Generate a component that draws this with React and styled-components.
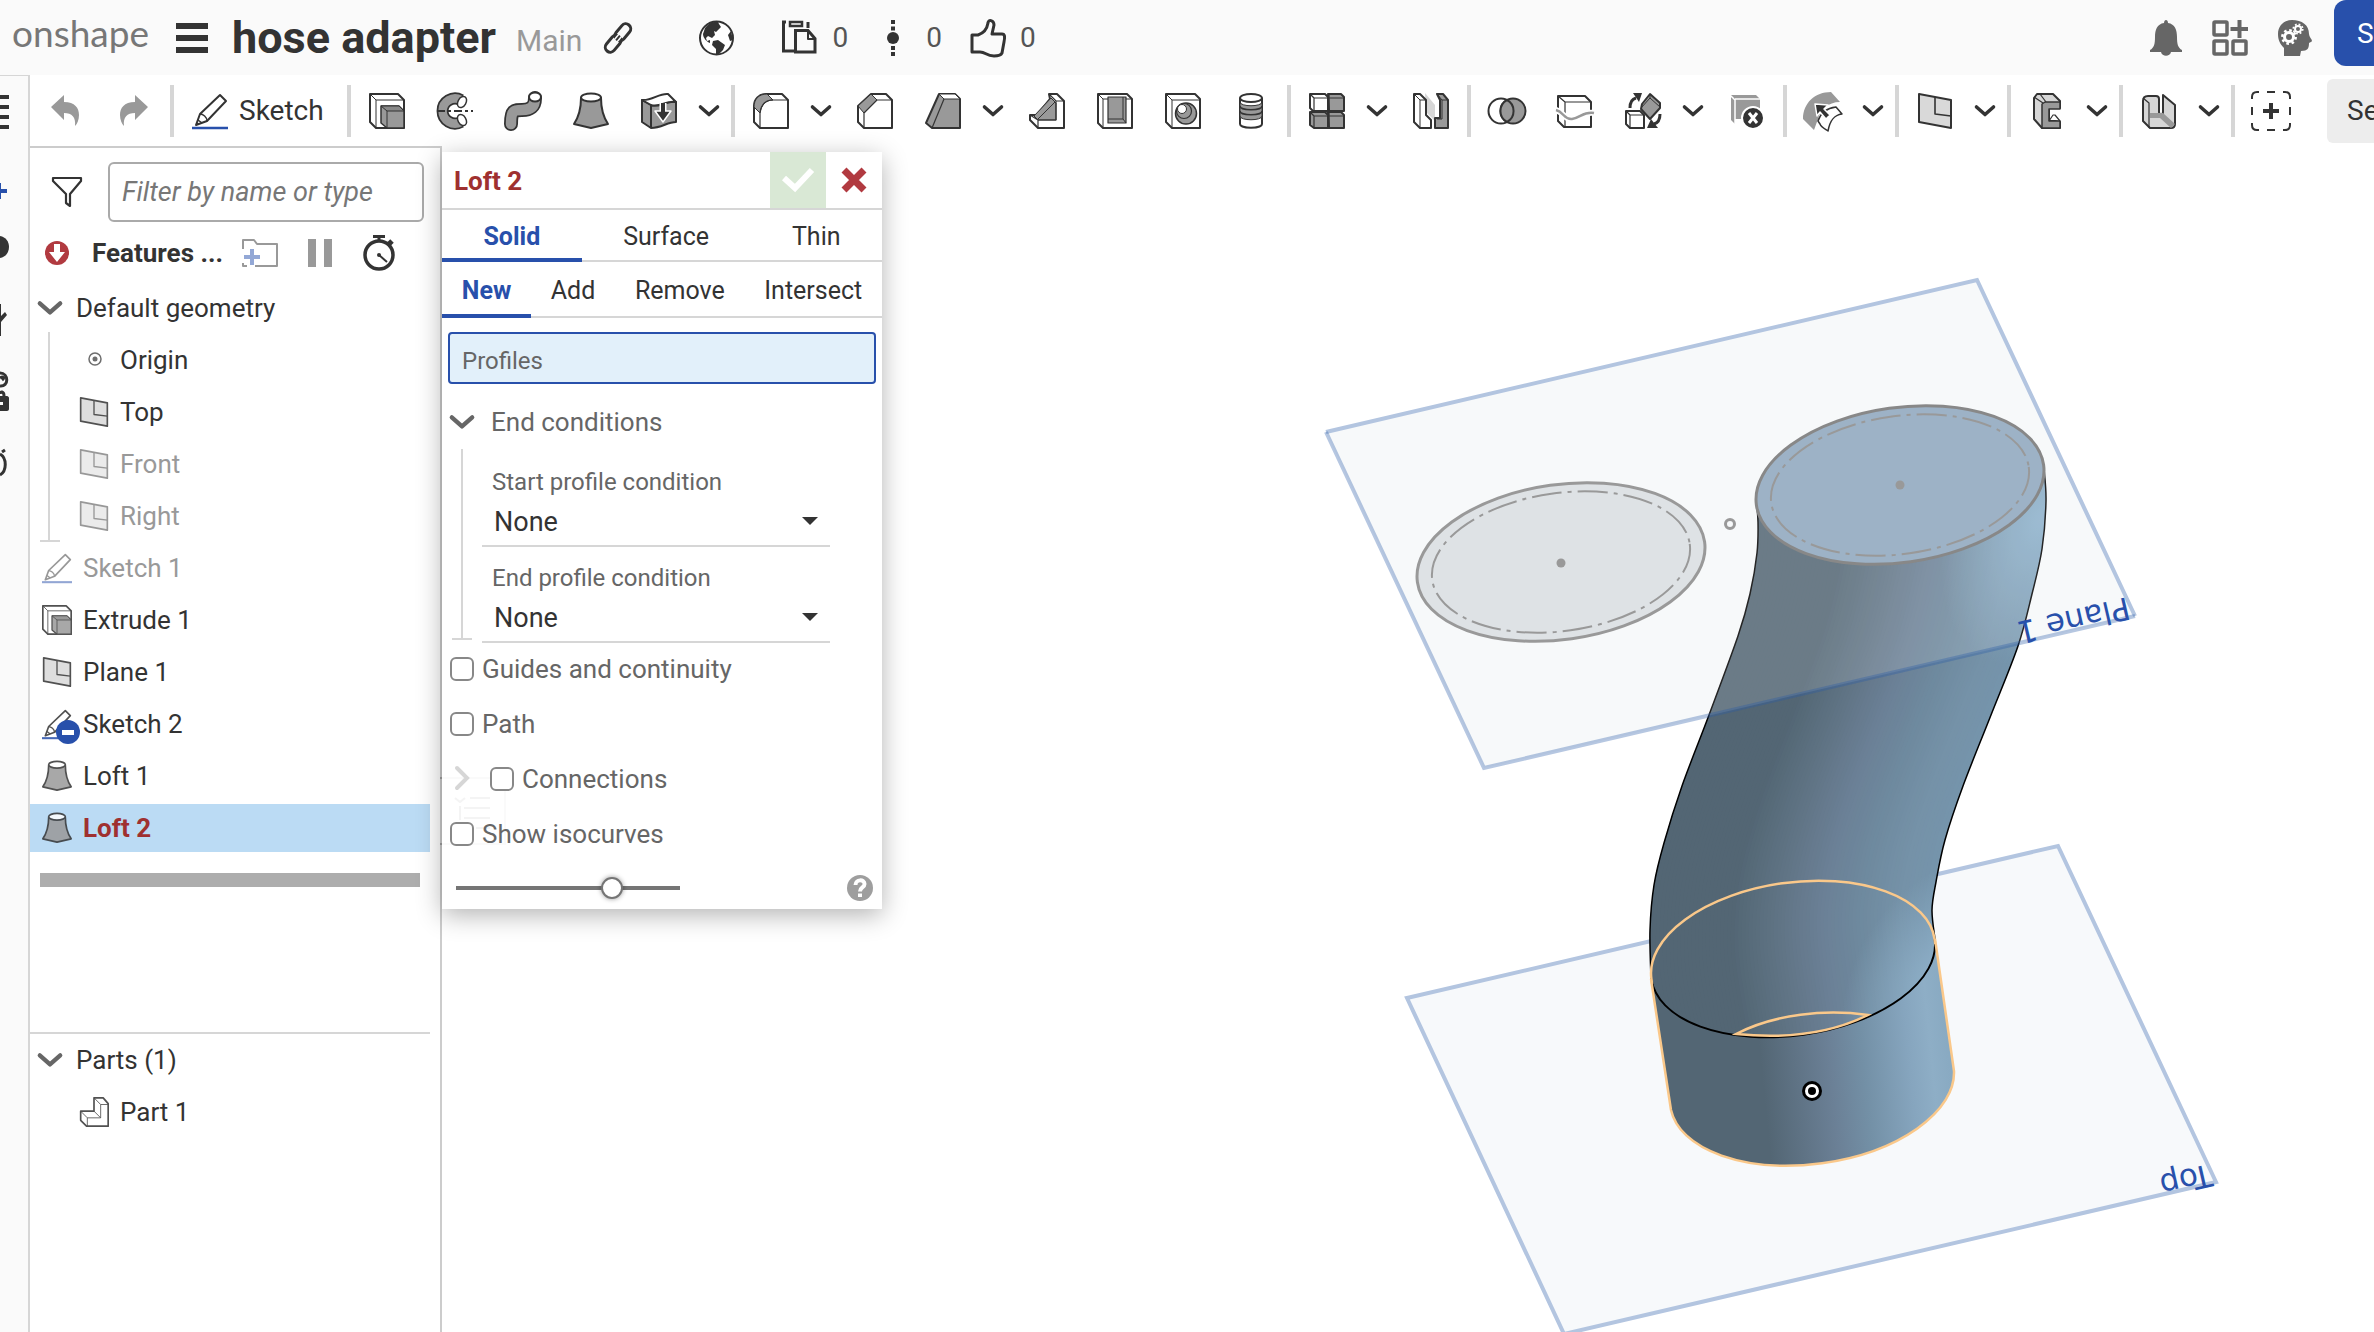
import React, { useState } from 'react';
import styled, { createGlobalStyle, css } from 'styled-components';

const GlobalStyle = createGlobalStyle`
  * {
    box-sizing: border-box;
  }
  body {
    margin: 0;
    font-family: Roboto, "Liberation Sans", sans-serif;
    font-size: 26px;
    color: #333;
    background: #fff;
  }
  button, input, select {
    font-family: inherit;
    font-size: inherit;
    color: inherit;
  }
  button {
    border: none;
    background: none;
    padding: 0;
    cursor: pointer;
  }
  ul {
    list-style: none;
    margin: 0;
    padding: 0;
  }
  svg {
    display: block;
    overflow: visible;
    flex: none;
  }
`;

const Page = styled.div`
  display: flex;
  flex-direction: column;
  height: 100vh;
  overflow: hidden;
`;

/* ---------- document header ---------- */

const Header = styled.header`
  display: flex;
  align-items: center;
  flex: none;
  height: 75px;
  padding-left: 12px;
  background: #fafafa;
`;
const Brand = styled.a`
  width: 164px;
  padding-bottom: 10px;
  font-family: Lato, sans-serif;
  font-size: 37px;
  line-height: 40px;
  color: #777;
  text-decoration: none;
`;
const MenuButton = styled.button`
  margin-right: 24px;
`;
const DocTitle = styled.h1`
  margin: 0 20px 0 0;
  font-size: 45px;
  line-height: 48px;
  font-weight: 700;
  white-space: nowrap;
`;
const Workspace = styled.span`
  margin-right: 22px;
  font-size: 30px;
  line-height: 48px;
  padding-top: 6px;
  color: #999;
`;
const HeaderIcon = styled.button`
  margin-right: ${(props) => props.$gap || 0}px;
`;
const Stats = styled.div`
  display: flex;
  gap: 28px;
`;
const Stat = styled.button`
  display: flex;
  align-items: center;
  gap: 14px;
  font-size: 28px;
  line-height: 36px;
  color: #555;
`;
const Account = styled.div`
  display: flex;
  align-items: center;
  align-self: flex-start;
  gap: 30px;
  height: 66px;
  margin-left: auto;
`;
const AccountIcon = styled.button`
  padding-top: 10px;
`;
const ShareButton = styled.button`
  width: 40px;
  height: 66px;
  margin-left: -8px;
  padding-left: 23px;
  overflow: hidden;
  text-align: left;
  white-space: nowrap;
  border-radius: 12px 0 0 12px;
  font-size: 28px;
  color: #fff;
  background: #2850ab;
`;

/* ---------- body ---------- */

const Body = styled.div`
  display: flex;
  flex: 1;
  min-height: 0;
`;
const Rail = styled.nav`
  flex: none;
  width: 30px;
  border-top: 1px solid #d6d6d6;
  border-right: 2px solid #d6d6d6;
  background: #fafafa;
`;
const RailItem = styled.button`
  display: flex;
  align-items: center;
  width: 28px;
  height: ${(props) => props.$h}px;
`;
const Main = styled.main`
  display: flex;
  flex-direction: column;
  flex: 1;
  min-width: 0;
`;
const Toolbar = styled.div`
  display: flex;
  align-items: center;
  flex: none;
  height: 71px;
  background: #fff;
`;
const Tool = styled.button`
  display: flex;
  justify-content: center;
  align-items: center;
  flex: none;
  width: ${(props) => props.$w || 68}px;
  height: 52px;
`;
const Drop = styled(Tool)`
  width: 32px;
  margin-right: 4px;
`;
const Divider = styled.span`
  flex: none;
  width: 4px;
  height: 52px;
  margin: 0 2px;
  background: #d6d6d6;
`;
const SketchButton = styled(Tool)`
  justify-content: flex-start;
  width: 169px;
  padding-left: 16px;
  gap: 11px;
  font-size: 28px;
`;
const SearchTools = styled.button`
  flex: 1;
  min-width: 0;
  height: 64px;
  margin-left: 22px;
  padding-left: 20px;
  overflow: hidden;
  text-align: left;
  white-space: nowrap;
  font-size: 28px;
  border-radius: 6px 0 0 6px;
  background: #ededed;
`;
const Studio = styled.div`
  display: flex;
  flex: 1;
  min-height: 0;
`;

/* ---------- feature list ---------- */

const Side = styled.aside`
  display: flex;
  flex-direction: column;
  flex: none;
  width: 412px;
  padding-right: 10px;
  border-top: 2px solid #ccc;
  border-right: 2px solid #ccc;
`;
const FilterRow = styled.div`
  display: flex;
  align-items: center;
  gap: 26px;
  padding: 14px 6px 0 22px;
`;
const FilterInput = styled.input`
  flex: 1;
  min-width: 0;
  height: 60px;
  padding: 0 12px;
  border: 2px solid #aaa;
  border-radius: 6px;
  font-size: 27px;
  &::placeholder {
    font-style: italic;
    color: #777;
    opacity: 1;
  }
`;
const FeaturesHead = styled.div`
  display: flex;
  align-items: center;
  height: 62px;
  padding-left: 15px;
`;
const FeaturesTitle = styled.h2`
  width: 150px;
  margin: 0 0 0 23px;
  font-size: 26px;
  font-weight: 700;
`;
const HeadButton = styled.button`
  margin-right: 30px;
`;
const GroupRow = styled.button`
  display: flex;
  align-items: center;
  gap: 14px;
  width: 100%;
  height: 48px;
  padding-left: 8px;
`;
const Children = styled.ul`
  position: relative;
  padding-top: 4px;
  &::before {
    content: "";
    position: absolute;
    left: 18px;
    top: 0;
    bottom: 2px;
    width: 2px;
    background: #d6d6d6;
  }
  &::after {
    content: "";
    position: absolute;
    left: 10px;
    bottom: 2px;
    width: 20px;
    height: 2px;
    background: #d6d6d6;
  }
`;
const Row = styled.li`
  display: flex;
  align-items: center;
  gap: 11px;
  height: 48px;
  margin-bottom: 4px;
  padding-left: ${(props) => (props.$nested ? 49 : 12)}px;
  color: ${(props) => (props.$muted ? '#999' : '#333')};
  svg {
    width: 30px;
    height: 30px;
    opacity: ${(props) => (props.$muted ? 0.5 : 0.85)};
  }
  ${(props) => props.$selected && css`
    font-weight: 700;
    color: #9f3030;
    background: #bbdbf4;
  `}
`;
const IconStack = styled.span`
  position: relative;
`;
const MinusBadge = styled.span`
  position: absolute;
  left: 14px;
  top: 11px;
  display: flex;
  align-items: center;
  justify-content: center;
  width: 24px;
  height: 24px;
  border-radius: 50%;
  background: #2850ab;
  &::before {
    content: "";
    width: 12px;
    height: 5px;
    background: #fff;
  }
`;
const RollbackBar = styled.div`
  height: 14px;
  margin: 17px 10px 0;
  background: #adadad;
`;
const Parts = styled.section`
  margin-top: auto;
  height: 300px;
  border-top: 2px solid #d6d6d6;
  padding-top: 2px;
  ul {
    padding-top: 4px;
  }
`;

/* ---------- loft dialog ---------- */

const Viewport = styled.section`
  position: relative;
  flex: 1;
  min-width: 0;
`;
const Dialog = styled.form`
  position: absolute;
  left: 0;
  top: 6px;
  width: 440px;
  height: 757px;
  background: #fff;
  box-shadow: 0 6px 24px rgba(0, 0, 0, 0.3);
`;
const DialogHead = styled.div`
  display: flex;
  align-items: center;
  height: 58px;
  border-bottom: 2px solid #d6d6d6;
`;
const DialogTitle = styled.h2`
  flex: 1;
  margin: 0;
  padding: 2px 0 0 12px;
  font-size: 26px;
  font-weight: 700;
  color: #9f3030;
`;
const HeadAction = styled.button`
  display: flex;
  align-items: center;
  justify-content: center;
  width: 56px;
  height: 56px;
  background: ${(props) => (props.$ok ? '#d9e8d5' : 'transparent')};
`;
const Tabs = styled.div`
  display: flex;
  height: ${(props) => props.$h}px;
  border-bottom: 2px solid #d6d6d6;
`;
const Tab = styled.button`
  flex: 1 1 auto;
  margin-bottom: -2px;
  padding-top: 5px;
  border-bottom: 4px solid transparent;
  font-size: 25px;
  ${(props) => props.$active && css`
    font-weight: 700;
    color: #2850ab;
    border-color: #2850ab;
  `}
`;
const ProfilesInput = styled.input`
  display: block;
  width: 428px;
  height: 52px;
  margin: 14px 6px 0;
  padding: 5px 12px 0;
  border: 2px solid #2850ab;
  border-radius: 4px;
  outline: none;
  font-size: 24px;
  background: #e2f0fa;
  &::placeholder {
    color: #666;
    opacity: 1;
  }
`;
const Section = styled.button`
  display: flex;
  align-items: center;
  gap: 17px;
  height: 48px;
  margin-top: 14px;
  padding-left: 8px;
  color: #666;
`;
const Conditions = styled.div`
  position: relative;
  margin-top: 3px;
  padding-left: 40px;
  &::before {
    content: "";
    position: absolute;
    left: 19px;
    top: 0;
    bottom: 4px;
    width: 2px;
    background: #d6d6d6;
  }
  &::after {
    content: "";
    position: absolute;
    left: 10px;
    bottom: 3px;
    width: 20px;
    height: 2px;
    background: #d6d6d6;
  }
`;
const Field = styled.div`
  position: relative;
  display: flex;
  flex-direction: column;
  width: 348px;
  height: ${(props) => (props.$first ? 98 : 96)}px;
  justify-content: flex-end;
  border-bottom: 2px solid #d6d6d6;
  label {
    padding-left: 10px;
    font-size: 24px;
    line-height: 32px;
    color: #666;
  }
  svg {
    position: absolute;
    right: 12px;
    bottom: 20px;
    pointer-events: none;
  }
`;
const Select = styled.select`
  appearance: none;
  height: 47px;
  padding: 0 40px 0 12px;
  border: none;
  outline: none;
  font-size: 27px;
  background: transparent;
`;
const Checks = styled.div`
  position: relative;
  display: flex;
  flex-direction: column;
  padding: 11px 0 0 8px;
`;
const Check = styled.label`
  display: flex;
  align-items: center;
  gap: 8px;
  height: 30px;
  margin-bottom: 25px;
  color: #666;
  input {
    appearance: none;
    width: 24px;
    height: 24px;
    margin: 0;
    border: 2px solid #888;
    border-radius: 6px;
    background: #fff;
  }
`;
const CheckGroup = styled.div`
  display: flex;
  gap: 20px;
  padding-left: 5px;
  button {
    height: 28px;
  }
`;
const DialogFoot = styled.div`
  display: flex;
  align-items: center;
  justify-content: space-between;
  padding: 1px 9px 0 14px;
`;
const Slider = styled.input`
  appearance: none;
  width: 224px;
  height: 22px;
  margin: 0;
  background: linear-gradient(#757575, #757575) center / 100% 4px no-repeat;
  &::-webkit-slider-thumb {
    appearance: none;
    width: 22px;
    height: 22px;
    border: 2px solid #757575;
    border-radius: 50%;
    background: #fff;
    box-shadow: 0 0 5px rgba(0, 0, 0, 0.4);
  }
`;
const GhostList = styled.svg`
  position: absolute;
  left: -2px;
  top: 625px;
  pointer-events: none;
`;
const Scene = styled.svg`
  width: 100%;
  height: 100%;
`;

/* ---------- icons ---------- */

const Icon = ({ w = 36, h = 36, children, label }) => (
  <svg
    width={w}
    height={h}
    viewBox={`0 0 ${w} ${h}`}
    fill="none"
    stroke="#333"
    strokeWidth="2"
    strokeLinejoin="round"
    aria-label={label}
  >
    {children}
  </svg>
);

const Chevron = ({ w = 20, color = '#333' }) => (
  <svg width={w} height={w * 0.6} viewBox="0 0 20 12" fill="none" stroke={color} strokeWidth="3.6">
    <path d="M1.5 2l8.500 7.500L18.500 2" strokeLinecap="round" strokeLinejoin="round" />
  </svg>
);

const PencilIcon = () => (
  <Icon>
    <path d="M4 32L8 21 28 2l6 6-19 20z" fill="#fff" />
    <path d="M8 21c3 0 7 3 7 7M6 27l4 3" strokeWidth="1.5" />
    <path d="M0 35h36" stroke="#2850ab" strokeWidth="2.5" />
  </Icon>
);
const ExtrudeIcon = () => (
  <Icon>
    <path d="M1 1h28l6 6v28H7l-6-6z" fill="#fff" />
    <path d="M1 1l6 6v28M7 7h28" strokeWidth="1" />
    <path d="M12 13h18l5 5v17H18l-6-5z" fill="#999" strokeWidth="1.5" />
    <path d="M12 13h18l5 5H18z" fill="#888" strokeWidth="1" />
    <path d="M18 18v17" strokeWidth="1" />
  </Icon>
);
const RevolveIcon = () => (
  <Icon>
    <path d="M24 7A12.500 12.500 0 1 0 24 29" strokeWidth="12" />
    <path d="M24 7A12.500 12.500 0 1 0 24 29" stroke="#999" strokeWidth="8.500" />
    <ellipse cx="25" cy="9" rx="4" ry="6" transform="rotate(30 25 9)" fill="#fff" strokeWidth="1.500" />
    <ellipse cx="25" cy="27" rx="4" ry="6" transform="rotate(-30 25 27)" fill="#fff" strokeWidth="1.500" />
    <path d="M0 18h36" strokeDasharray="8 3 3 3" />
  </Icon>
);
const SweepIcon = () => (
  <Icon w={38}>
    <path d="M7 31c0-14 3-14 11-14s13-3 13-12" strokeWidth="14" strokeLinecap="round" />
    <path d="M7 31c0-14 3-14 11-14s13-3 13-12" stroke="#999" strokeWidth="10.500" strokeLinecap="round" />
    <ellipse cx="31" cy="4" rx="6" ry="4.500" fill="#fff" />
  </Icon>
);
const LoftIcon = () => (
  <Icon>
    <path d="M8 5C8 16 5 25 1 31l17 4 17-4c-4-6-7-15-7-26z" fill="#999" />
    <ellipse cx="18" cy="4.500" rx="10" ry="4" fill="#fff" />
  </Icon>
);
const ThickenIcon = () => (
  <Icon>
    <path d="M1 7l9 5v23l-9-6zM10 12c9 3 15-5 25-3v20c-9 0-14 6-25 6z" fill="#999" />
    <path d="M1 7C11 8 18 0 27 1l8 8c-10-2-16 6-25 3z" fill="#fff" />
    <path d="M22 10v14" stroke="#fff" strokeWidth="7" />
    <path d="M14 18l8 11 8-11z" fill="#333" stroke="#fff" strokeWidth="1.500" />
    <path d="M22 10v12" strokeWidth="4" />
  </Icon>
);
const FilletIcon = () => (
  <Icon>
    <path d="M13 1h16l6 6v28H7l-6-6V13C1 6 6 1 13 1z" fill="#fff" />
    <path d="M1 14C1 6 6 1 14 1l6 6c-7 0-12 5-13 13z" fill="#999" strokeWidth="1" />
    <path d="M7 35V20C8 12 12 7 20 7h15" strokeWidth="1.200" />
  </Icon>
);
const ChamferIcon = () => (
  <Icon>
    <path d="M14 1h15l6 6v28H7l-6-6V13z" fill="#fff" />
    <path d="M1 13L14 1l6 6L7 20z" fill="#999" strokeWidth="1" />
    <path d="M7 35V20L20 7h15" strokeWidth="1.200" />
  </Icon>
);
const DraftIcon = () => (
  <Icon>
    <path d="M14 1h16l5 5v29H7l-6-5z" fill="#999" />
    <path d="M14 1h16l5 5H19z" fill="#fff" strokeWidth="1" />
    <path d="M19 6L7 35" strokeWidth="1.200" />
  </Icon>
);
const RibIcon = () => (
  <Icon>
    <path d="M20 1h8l7 7v27H9l-8-8v-5h7l13-16z" fill="#fff" />
    <path d="M5 23L22 5l5 5v17H9z" fill="#999" strokeWidth="1" />
    <path d="M20 1l7 7h8M27 8v19H9v8M1 22l8 5" strokeWidth="1.200" />
    <path d="M9 26L26 9" strokeWidth="1" />
  </Icon>
);
const ShellIcon = () => (
  <Icon>
    <path d="M1 1h29l5 5v29H6l-5-5z" fill="#fff" />
    <path d="M11 4h18v26H11z" fill="#999" strokeWidth="1.200" />
    <path d="M1 1l5 5v29M6 6h5M29 6h6M26 4v22l3 4M11 26h15" strokeWidth="1" />
  </Icon>
);
const HoleIcon = () => (
  <Icon>
    <path d="M1 1h29l5 5v29H7l-6-6z" fill="#fff" />
    <path d="M1 1l6 6v28M7 7h28" strokeWidth="1" />
    <circle cx="21" cy="20.500" r="10.500" fill="#999" strokeWidth="1.500" />
    <circle cx="19" cy="18" r="7.500" fill="#999" strokeWidth="1.200" />
    <circle cx="17" cy="16" r="4.500" fill="#fff" strokeWidth="1" />
  </Icon>
);
const ThreadIcon = () => (
  <Icon w={24}>
    <path d="M1 5v26c0 5 22 5 22 0V5" fill="#fff" />
    <path d="M1 9c0 5 22 5 22 0v14c0 5-22 5-22 0z" fill="#999" strokeWidth="1" />
    <path d="M1 13c0 5 22 5 22 0M1 18c0 5 22 5 22 0" strokeWidth="1.500" />
    <ellipse cx="12" cy="5" rx="11" ry="4" fill="#fff" />
  </Icon>
);
const PatternIcon = () => (
  <Icon>
    <path d="M1 1h15l3 3v14H4l-3-3z" fill="#fff" />
    <path d="M19 1h13l3 3v14H20zM1 19h15l3 3v13H5l-4-3zM19 19h13l3 3v13H20z" fill="#999" />
    <path d="M1 1l4 4v13M5 5h13M20 5h15M1 19l4 4v12M5 23h13M20 23h15M20 1v34" strokeWidth="1.200" />
  </Icon>
);
const MirrorIcon = () => (
  <Icon>
    <path d="M12 0l10 12v16l-9-9z" fill="#d6d6d6" stroke="none" />
    <path d="M1 1h6l6 6v15l5 5v8H7l-6-6z" fill="#fff" />
    <path d="M1 1l6 6v28M7 7h6" strokeWidth="1" />
    <path d="M24 1h6l5 6v28H22V25h5V7z" fill="#999" />
    <path d="M24 1l5 6h6M29 7v19h-5" strokeWidth="1" />
  </Icon>
);
const BooleanIcon = () => (
  <Icon w={38}>
    <circle cx="13" cy="18" r="12.500" fill="#fff" />
    <circle cx="25" cy="18" r="12.500" fill="#999" />
    <path d="M19 7a12.500 12.500 0 0 1 0 22a12.500 12.500 0 0 1 0-22z" fill="#999" />
  </Icon>
);
const SplitIcon = () => (
  <Icon w={38}>
    <path d="M2 3h27l6 6v25H8l-6-6z" fill="#fff" />
    <path d="M2 3l7 6h26M9 9v25" strokeWidth="1.200" />
    <path d="M0 17c8 2 8 10 16 9s12-8 22-6" stroke="#fff" strokeWidth="6" />
    <path d="M0 17c8 2 8 10 16 9s12-8 22-6" stroke="#999" strokeWidth="2.500" />
  </Icon>
);
const TransformIcon = () => (
  <Icon>
    <path d="M1 18h14l4 4v13H5l-4-4z" fill="#fff" />
    <path d="M1 18l4 4h14M5 22v13" strokeWidth="1.200" />
    <path d="M25 1l10 9v5L25 26l-9-10 1-5z" fill="#999" />
    <path d="M25 1v4l10 9M25 5l-9 10" strokeWidth="1" />
    <path d="M5 15C5 9 7 6 11 5" strokeWidth="3" />
    <path d="M8 0h9l-3 9z" fill="#333" stroke="none" />
    <path d="M35 21c0 6-2 9-6 10" strokeWidth="3" />
    <path d="M22 35l4-9 7 9z" fill="#333" stroke="none" />
  </Icon>
);
const DeleteIcon = () => (
  <Icon>
    <path d="M2 2h25l4 4v20H6v5l-4-4z" fill="#999" stroke="none" />
    <path d="M1 2l5 5v25M6 6h25" stroke="#fff" strokeWidth="1.500" />
    <circle cx="24" cy="25" r="11" fill="#333" stroke="#fff" />
    <path d="M20 20l8 10M28 20l-8 10" stroke="#fff" strokeWidth="3" />
  </Icon>
);
const ModifyIcon = () => (
  <Icon w={40} h={40}>
    <path d="M0 28C0 12 12 1 28 1l9 10c-12 0-20 8-22 17l-4 11z" fill="#999" stroke="none" />
    <path d="M15 30c3-9 9-13 18-14l6 7c-8 1-12 6-14 17-3-2-7-4-8-7z" fill="#fff" strokeWidth="1.500" />
    <path d="M12 13l13 1-4 4 6 6-4 4-6-7-3 4z" fill="#333" stroke="#fff" strokeWidth="1.500" />
  </Icon>
);
const PlaneIcon = () => (
  <Icon>
    <path d="M2 1l32 6v28L2 29z" fill="#d9d9d9" />
    <path d="M18 4v17l16 2" strokeWidth="1.600" />
  </Icon>
);
const FrameIcon = () => (
  <Icon w={28}>
    <path d="M4 1h16l7 7v7H16v13h6l5 1v6H9l-8-9V5z" fill="#d6d6d6" />
    <path d="M9 11l3-2h15v7H16v12h11v7H9z" fill="#999" strokeWidth="1.500" />
    <path d="M1 4l9 6M7 1l6 8M16 28l4-6h2l5 6" strokeWidth="1.200" />
  </Icon>
);
const SheetMetalIcon = () => (
  <Icon>
    <path d="M2 8c0-4 2-5 5-5h8c2 0 3 1 3 3v13c0 3 4 3 4 0V2l12 10v19c0 2-1 4-4 4H9l-7-7z" fill="#d6d6d6" />
    <path d="M9 20h13l12 11-4 4-11-10H9z" fill="#999" stroke="none" />
    <path d="M2 5l6 5v25" strokeWidth="1.200" />
  </Icon>
);
const AddToolIcon = () => (
  <Icon w={40} h={40}>
    <path d="M1 8V6c0-3 2-5 5-5h2M16 1h8M32 1h2c3 0 5 2 5 5v2M39 16v8M39 32v2c0 3-2 5-5 5h-2M24 39h-8M8 39H6c-3 0-5-2-5-5v-2M1 24v-8" />
    <path d="M20 12v16M12 20h16" strokeWidth="4" />
  </Icon>
);
const UndoIcon = ({ flip }) => (
  <svg width="28" height="32" viewBox="0 0 28 32" fill="#999">
    <path
      transform={flip ? 'matrix(-1 0 0 1 28 0)' : undefined}
      d="M0 12L13 0v7c11 0 15 6 15 13 0 5-2 9-4 11 1-9-3-13-11-13v7z"
    />
  </svg>
);
const LinkIcon = () => (
  <Icon w={28} h={28}>
    <g transform="rotate(-50 14 14)" strokeWidth="3">
      <rect x="-3" y="9" width="19" height="10" rx="5" />
      <rect x="12" y="9" width="19" height="10" rx="5" />
      <path d="M9 14h10" stroke="#fafafa" strokeWidth="5" />
      <path d="M11 14h6" strokeWidth="2" />
    </g>
  </Icon>
);
const GlobeIcon = () => (
  <Icon w={35}>
    <circle cx="17.500" cy="18" r="16.500" fill="#fff" />
    <path d="M6 8C10 3 14 1 19 2l1 2 2 3-5 5-2-1 1 4-3 3-4-2-2 2 1 3 3-1 0 3C8 22 4 18 4 14z" fill="#333" stroke="none" />
    <path d="M14 21l5-1 7 5-2 5-5 5-2 0 0-6-4-4z" fill="#333" stroke="none" />
    <path d="M32 11l-3 4 2 6 3-1z" fill="#333" stroke="none" />
  </Icon>
);
const CopyIcon = () => (
  <Icon>
    <path d="M4 2H1.500v29H12M26 2v6" strokeWidth="3" strokeLinejoin="miter" />
    <path d="M8 2h12v4H8z" strokeWidth="2.500" strokeLinejoin="miter" />
    <path d="M13.500 10.500H26l7 8V32H13.500z" strokeWidth="3" strokeLinejoin="miter" />
    <path d="M26 10v9h8" />
  </Icon>
);
const VersionIcon = () => (
  <Icon>
    <circle cx="17" cy="18" r="6" fill="#333" stroke="none" />
    <path d="M17 0v4M17 6.500v4M17 26v4M17 32v4" strokeWidth="4" />
  </Icon>
);
const ThumbIcon = () => (
  <Icon w={36} h={38}>
    <path d="M2 16h6c6-2 9-6 10-12 0-4 6-3 6 2l-2 9h10c3 0 3 3 2 8l-2 11c-1 2-4 3-8 3-8 0-8-4-14-4H2z" strokeWidth="3" />
  </Icon>
);
const BellIcon = () => (
  <svg width="32" height="36" viewBox="0 0 32 36" fill="#666">
    <path d="M14 3c0-4 4-4 4 0 7 1 9 7 9 14 0 7 1 11 5 13v2H21c-1 5-9 5-10 0H0v-2c4-2 5-6 5-13C5 10 7 4 14 3z" />
  </svg>
);
const AppsIcon = () => (
  <svg width="36" height="36" viewBox="0 0 36 36" fill="none" stroke="#666" strokeWidth="3.500">
    <rect x="2" y="2" width="13" height="13" rx="1" />
    <rect x="2" y="21" width="13" height="13" rx="1" />
    <rect x="21" y="21" width="13" height="13" rx="1" />
    <path d="M27.500 0v18M18.500 9H36" strokeWidth="4" />
  </svg>
);
const HeadIcon = () => (
  <svg width="34" height="36" viewBox="0 0 34 36">
    <path d="M14 0C24 0 31 5 31 14c0 3 3 5 3 7 0 1-2 1-3 2 0 5-1 8-8 8l-1 5H6v-8C2 24 0 20 0 14 0 6 6 0 14 0z" fill="#666" />
    <circle cx="11" cy="17" r="4.500" fill="none" stroke="#fff" strokeWidth="3" />
    <circle cx="11" cy="17" r="6.700" fill="none" stroke="#fff" strokeWidth="2.500" strokeDasharray="2.600 2.660" />
    <circle cx="20" cy="9" r="3" fill="none" stroke="#fff" strokeWidth="2" />
    <circle cx="20" cy="9" r="4.700" fill="none" stroke="#fff" strokeWidth="1.800" strokeDasharray="1.800 1.890" />
  </svg>
);
const FunnelIcon = () => (
  <Icon w={30} h={30}>
    <path d="M1 1h28v3L18 17v12l-4-3v-9L1 4z" strokeWidth="2.200" />
  </Icon>
);
const ErrorIcon = () => (
  <svg width="24" height="24" viewBox="0 0 24 24">
    <circle cx="12" cy="12" r="12" fill="#b13a40" />
    <path d="M9 3h6v8h5l-8 10L4 11h5z" fill="#fff" />
  </svg>
);
const FolderIcon = () => (
  <Icon w={36} h={28}>
    <path d="M1 10V1h11l3 4h20v22H13M1 24v3h4" stroke="#999" />
    <path d="M10 10v16M2 18h16" stroke="#93a8d6" strokeWidth="4" />
  </Icon>
);
const PauseIcon = () => (
  <svg width="24" height="28" viewBox="0 0 24 28" fill="#999">
    <path d="M0 0h8v28H0zM16 0h8v28h-8z" />
  </svg>
);
const StopwatchIcon = () => (
  <Icon w={34} h={36}>
    <circle cx="17" cy="20" r="14" strokeWidth="3.500" />
    <path d="M11 1.500h12M17 1v5" strokeWidth="3" />
    <path d="M27 9l3-3" strokeWidth="5" />
    <circle cx="17" cy="20" r="2" fill="#333" stroke="none" />
    <path d="M17 20l8 7" />
  </Icon>
);
const OriginIcon = () => (
  <svg width="30" height="30" viewBox="0 0 30 30">
    <circle cx="16" cy="14" r="6" fill="none" stroke="#555" strokeWidth="1.500" />
    <circle cx="16" cy="14" r="2.500" fill="#555" />
  </svg>
);
const PartIcon = () => (
  <Icon>
    <path d="M18 1h11l6 7v27H9l-7-7V17h16z" fill="#fff" />
    <path d="M18 1l8 8h9M26 9v16H10v10M2 17l8 8M18 17l8 8" strokeWidth="1" />
  </Icon>
);

/* ---------- 3D scene ---------- */

const LEFT = [[1756, 498], [1758, 522], [1757, 553], [1750, 594], [1738, 636], [1709, 715], [1682, 786], [1664, 843], [1654, 885], [1650, 930], [1651, 979]];
const RIGHT = [[2044, 468], [2046, 501], [2042, 549], [2032, 594], [2018, 646], [1991, 715], [1963, 786], [1945, 840], [1936, 882], [1932, 910], [1935, 939]];
const RAMP = [
  [0, [83, 102, 116]],
  [0.3, [83, 102, 116]],
  [0.45, [95, 115, 131]],
  [0.62, [107, 128, 150]],
  [0.75, [110, 137, 158]],
  [0.9, [117, 146, 168]],
  [1, [117, 148, 171]],
];

// Catmull-Rom spline through the points
function smooth(pts) {
  let d = `M${pts[0][0]} ${pts[0][1]}`;
  for (let i = 0; i < pts.length - 1; i++) {
    const p0 = pts[i - 1] || pts[i];
    const p1 = pts[i];
    const p2 = pts[i + 1];
    const p3 = pts[i + 2] || p2;
    d += `C${p1[0] + (p2[0] - p0[0]) / 6} ${p1[1] + (p2[1] - p0[1]) / 6} ${p2[0] - (p3[0] - p1[0]) / 6} ${p2[1] - (p3[1] - p1[1]) / 6} ${p2[0]} ${p2[1]}`;
  }
  return d;
}

function shade(t) {
  let i = 0;
  while (i < RAMP.length - 2 && t > RAMP[i + 1][0]) i++;
  const [a, ca] = RAMP[i];
  const [b, cb] = RAMP[i + 1];
  const k = (t - a) / (b - a);
  return `rgb(${ca.map((c, n) => Math.round(c + (cb[n] - c) * k)).join(',')})`;
}

const leftEdge = smooth(LEFT);
const rightUp = smooth([...RIGHT].reverse());
const tubeOutline = `${leftEdge}A143 76.500 -8 0 0 1935 939${rightUp.replace('M', 'L')}A145.300 77.500 -8 0 1 1756 498Z`;
const cylinderSide = 'M1651 979L1671 1110A143 77 -8 0 0 1954 1071L1935 939';

const bands = Array.from({ length: 80 }, (_, i) => {
  const t = i / 79;
  const l = [...LEFT, [1668, 1060]];
  const r = [...RIGHT, [1948, 1060]];
  return {
    d: smooth(l.map((p, n) => [p[0] + (r[n][0] - p[0]) * t, p[1] + (r[n][1] - p[1]) * t])),
    color: shade(t),
  };
});

const HoseScene = () => (
  <Scene viewBox="442 146 1932 1186" preserveAspectRatio="xMinYMin slice" fill="none" role="img" aria-label="Hose adapter model">
    <defs>
      <linearGradient id="cyl" gradientUnits="userSpaceOnUse" x1="1664" y1="1060" x2="1946" y2="1032">
        <stop offset="0" stopColor="#536674" />
        <stop offset="0.34" stopColor="#536674" />
        <stop offset="0.58" stopColor="#6b8096" />
        <stop offset="0.7" stopColor="#7390a6" />
        <stop offset="0.86" stopColor="#86a5be" />
        <stop offset="0.94" stopColor="#8eaec6" />
        <stop offset="1" stopColor="#89aac2" />
      </linearGradient>
      <radialGradient id="glow" gradientUnits="userSpaceOnUse" cx="0" cy="0" r="1" gradientTransform="translate(1940 980) rotate(-60) scale(130 85)">
        <stop offset="0" stopColor="#93b5ce" stopOpacity="0.9" />
        <stop offset="1" stopColor="#93b5ce" stopOpacity="0" />
      </radialGradient>
      <radialGradient id="glowTop" gradientUnits="userSpaceOnUse" cx="0" cy="0" r="1" gradientTransform="translate(2040 520) rotate(-70) scale(150 90)">
        <stop offset="0" stopColor="#8fb4cf" stopOpacity="0.9" />
        <stop offset="1" stopColor="#8fb4cf" stopOpacity="0" />
      </radialGradient>
      <clipPath id="tube">
        <path d={tubeOutline} />
      </clipPath>
    </defs>

    <path d="M1407 998L2058 846l158 336-652 152z" fill="#f7f9fb" stroke="#b3c5e0" strokeWidth="4" />
    <text x="2209" y="1164" transform="rotate(167 2209 1164)" fontFamily="DejaVu Sans, sans-serif" fontSize="31" fill="#2850ab">Top</text>
    <path d="M1326 432L1977 280l158 336-651 152z" fill="#f7f9fb" />

    <path d={cylinderSide} fill="url(#cyl)" />
    <g clipPath="url(#tube)">
      {bands.map((b, i) => (
        <path key={i} d={b.d} stroke={b.color} strokeWidth="9" strokeLinecap="square" />
      ))}
      <rect x="1640" y="820" width="320" height="230" fill="url(#glow)" />
      <rect x="1740" y="380" width="320" height="300" fill="url(#glowTop)" />
    </g>
    <path d={leftEdge} stroke="#000" strokeWidth="1.500" />
    <path d={rightUp} stroke="#000" strokeWidth="1.500" />

    <g transform="rotate(-8 1793 959)">
      <path d="M1650 959a143 76.500 0 0 0 286 0" stroke="#000" strokeWidth="2" />
      <path d="M1650 964v-5a143 76.500 0 0 1 286 0v5" stroke="#fac88a" strokeWidth="2.500" />
    </g>
    <path d="M1736 1034C1775 1014 1825 1009 1868 1015C1830 1034 1785 1039 1736 1034z" stroke="#fac88a" strokeWidth="2.500" />
    <path d={cylinderSide} stroke="#fac88a" strokeWidth="2.500" />

    {/* upper plane is translucent, so the tube shows through it */}
    <path d="M1326 432L1977 280l158 336-651 152z" fill="#f7f9fb" fillOpacity="0.15" />
    <path d="M1326 432L1977 280l158 336" stroke="#b3c5e0" strokeWidth="4" />
    <path d="M2135 616L1484 768 1326 432" stroke="#2a5ca8" strokeOpacity="0.34" strokeWidth="4" />
    <text x="2127" y="597" transform="rotate(167 2127 597)" fontFamily="DejaVu Sans, sans-serif" fontSize="31" fill="#2850ab">Plane 1</text>

    <g stroke="#999">
      <g transform="rotate(-8 1561 562)">
        <ellipse cx="1561" cy="562" rx="145" ry="77.500" fill="#dee2e5" strokeWidth="3" />
        <ellipse cx="1561" cy="562" rx="130" ry="69" strokeWidth="2" strokeDasharray="30 6 4 6" />
      </g>
      <g transform="rotate(-8 1900 485)">
        <ellipse cx="1900" cy="485" rx="145" ry="77.500" fill="#9db2c6" stroke="#888" strokeWidth="3" />
        <ellipse cx="1900" cy="485" rx="130" ry="69" strokeWidth="2" strokeDasharray="30 6 4 6" />
      </g>
      <circle cx="1730" cy="524" r="4.500" strokeWidth="3" />
    </g>
    <circle cx="1561" cy="563" r="4.500" fill="#999" />
    <circle cx="1900" cy="485" r="4.500" fill="#999" />

    <circle cx="1812" cy="1091" r="10" fill="#000" />
    <circle cx="1812" cy="1091" r="5.500" fill="#000" stroke="#fff" strokeWidth="3" />
  </Scene>
);

const toolGroups = [
  [['Extrude', ExtrudeIcon], ['Revolve', RevolveIcon], ['Sweep', SweepIcon], ['Loft', LoftIcon], ['Thicken', ThickenIcon, true]],
  [['Fillet', FilletIcon, true], ['Chamfer', ChamferIcon], ['Draft', DraftIcon, true], ['Rib', RibIcon], ['Shell', ShellIcon], ['Hole', HoleIcon], ['Thread', ThreadIcon]],
  [['Pattern', PatternIcon, true], ['Mirror', MirrorIcon]],
  [['Boolean', BooleanIcon], ['Split', SplitIcon], ['Transform', TransformIcon, true], ['Delete part', DeleteIcon]],
  [['Modify', ModifyIcon, true]],
  [['Plane', PlaneIcon, true]],
  [['Frame', FrameIcon, true]],
  [['Sheet metal', SheetMetalIcon, true]],
];

const geometry = [
  { name: 'Origin', icon: OriginIcon },
  { name: 'Top', icon: PlaneIcon },
  { name: 'Front', icon: PlaneIcon, muted: true },
  { name: 'Right', icon: PlaneIcon, muted: true },
];

const features = [
  { name: 'Sketch 1', icon: PencilIcon, muted: true },
  { name: 'Extrude 1', icon: ExtrudeIcon },
  { name: 'Plane 1', icon: PlaneIcon },
  { name: 'Sketch 2', icon: PencilIcon, badge: true },
  { name: 'Loft 1', icon: LoftIcon },
  { name: 'Loft 2', icon: LoftIcon, selected: true },
];

const LoftDialog = () => {
  const [body, setBody] = useState('Solid');
  const [op, setOp] = useState('New');
  const [opacity, setOpacity] = useState(72);

  return (
    <Dialog onSubmit={(e) => e.preventDefault()}>
      <GhostList width="66" height="68" viewBox="0 0 66 68" fill="none" stroke="#f4f4f4" strokeWidth="2">
        <path d="M2 1h63v66H2" stroke="#fafafa" />
        <path d="M15 21l5 4 5-4M20 29v14M30 21h20M24 31h26M24 41h26M36 51h14" />
        <path d="M0 1h2M0 67h2" stroke="#888" />
      </GhostList>
      <DialogHead>
        <DialogTitle>Loft 2</DialogTitle>
        <HeadAction $ok aria-label="Accept">
          <svg width="32" height="24" viewBox="0 0 32 24" fill="none" stroke="#fff" strokeWidth="6">
            <path d="M2 10l11 10L30 2" />
          </svg>
        </HeadAction>
        <HeadAction type="button" aria-label="Cancel">
          <svg width="24" height="24" viewBox="0 0 24 24" fill="none" stroke="#b13a40" strokeWidth="7">
            <path d="M2 2l20 20M22 2L2 22" />
          </svg>
        </HeadAction>
      </DialogHead>
      <Tabs $h={52}>
        {['Solid', 'Surface', 'Thin'].map((t) => (
          <Tab key={t} type="button" $active={t === body} onClick={() => setBody(t)}>{t}</Tab>
        ))}
      </Tabs>
      <Tabs $h={56}>
        {['New', 'Add', 'Remove', 'Intersect'].map((t) => (
          <Tab key={t} type="button" $active={t === op} onClick={() => setOp(t)}>{t}</Tab>
        ))}
      </Tabs>
      <ProfilesInput placeholder="Profiles" aria-label="Profiles" />
      <Section type="button">
        <Chevron w={24} color="#666" />
        End conditions
      </Section>
      <Conditions>
        {['Start', 'End'].map((side, i) => (
          <Field key={side} $first={i === 0}>
            <label htmlFor={side}>{side} profile condition</label>
            <Select id={side}>
              <option>None</option>
            </Select>
            <svg width="16" height="8" viewBox="0 0 16 8" fill="#333"><path d="M0 0h16L8 8z" /></svg>
          </Field>
        ))}
      </Conditions>
      <Checks>
        <Check><input type="checkbox" />Guides and continuity</Check>
        <Check><input type="checkbox" />Path</Check>
        <CheckGroup>
          <button type="button" aria-label="Expand connections">
            <svg width="15" height="24" viewBox="0 0 15 24" fill="none" stroke="#d6d6d6" strokeWidth="4">
              <path d="M2 2l10 10L2 22" strokeLinecap="round" />
            </svg>
          </button>
          <Check><input type="checkbox" />Connections</Check>
        </CheckGroup>
        <Check><input type="checkbox" />Show isocurves</Check>
      </Checks>
      <DialogFoot>
        <Slider type="range" min="0" max="100" aria-label="Preview opacity" value={opacity} onChange={(e) => setOpacity(e.target.value)} />
        <button type="button" aria-label="Help">
          <svg width="26" height="26" viewBox="0 0 26 26" fill="none" stroke="#fff" strokeWidth="4">
            <circle cx="13" cy="13" r="13" fill="#9e9e9e" stroke="none" />
            <path d="M8.500 10c0-6 9-6 9-1 0 4-4.500 3-4.500 7.500M13 18.500v3.500" />
          </svg>
        </button>
      </DialogFoot>
    </Dialog>
  );
};

const FeatureRow = ({ item, nested }) => {
  const RowIcon = item.icon;
  return (
    <Row $nested={nested} $muted={item.muted} $selected={item.selected}>
      <IconStack>
        <RowIcon />
        {item.badge && <MinusBadge />}
      </IconStack>
      {item.name}
    </Row>
  );
};

export default function App() {
  return (
    <Page>
      <GlobalStyle />
      <Header>
        <Brand href="#">onshape</Brand>
        <MenuButton aria-label="Menu">
          <svg width="32" height="30" viewBox="0 0 32 30" fill="#333">
            <path d="M0 0h32v6H0zM0 12h32v6H0zM0 24h32v6H0z" />
          </svg>
        </MenuButton>
        <DocTitle>hose adapter</DocTitle>
        <Workspace>Main</Workspace>
        <HeaderIcon $gap={67} aria-label="Copy link"><LinkIcon /></HeaderIcon>
        <HeaderIcon $gap={48} aria-label="Public document"><GlobeIcon /></HeaderIcon>
        <Stats>
          <Stat aria-label="Copies"><CopyIcon />0</Stat>
          <Stat aria-label="Versions"><VersionIcon />0</Stat>
          <Stat aria-label="Likes"><ThumbIcon />0</Stat>
        </Stats>
        <Account>
          <AccountIcon aria-label="Notifications"><BellIcon /></AccountIcon>
          <AccountIcon aria-label="App store"><AppsIcon /></AccountIcon>
          <AccountIcon aria-label="Learning center"><HeadIcon /></AccountIcon>
          <ShareButton>S</ShareButton>
        </Account>
      </Header>
      <Body>
        <Rail>
          <RailItem $h={72} aria-label="Feature list">
            <svg width="10" height="34" fill="#333"><path d="M0 0h9v4H0zM0 10h9v4H0zM0 20h9v4H0zM0 30h9v4H0z" /></svg>
          </RailItem>
          <RailItem $h={86} aria-label="Add">
            <svg width="8" height="16" fill="#2850ab"><path d="M0 0h1v6h6v4H1v6H0z" /></svg>
          </RailItem>
          <RailItem $h={26} aria-label="Comments">
            <svg width="9" height="22" fill="#333"><path d="M0 0c12 2 12 20 0 22z" /></svg>
          </RailItem>
          <RailItem $h={120} aria-label="Branches">
            <svg width="8" height="32" fill="#333"><path d="M0 0h1v12l4-4 2 3-6 7v14H0z" /></svg>
          </RailItem>
          <RailItem $h={22} aria-label="Permissions">
            <svg width="9" height="40" fill="none" stroke="#333" strokeWidth="3">
              <path d="M0 2c9 0 9 14 0 13M0 7c3-2 5 0 2 2M0 23c0-3 4-3 4 2" />
              <path d="M0 25h7c1 0 2 1 2 2v11c0 1-1 2-2 2H0v-6h3v-3H0z" fill="#333" stroke="none" />
            </svg>
          </RailItem>
          <RailItem $h={122} aria-label="Performance">
            <svg width="7" height="28" fill="none" stroke="#333" strokeWidth="3"><path d="M0 5c7 4 7 17 0 21M2 3l3-2" /></svg>
          </RailItem>
        </Rail>
        <Main>
          <Toolbar>
            <Tool $w={69} aria-label="Undo"><UndoIcon /></Tool>
            <Tool $w={69} aria-label="Redo"><UndoIcon flip /></Tool>
            <Divider />
            <SketchButton $w={169}><PencilIcon />Sketch</SketchButton>
            <Divider />
            {toolGroups.map((group, g) => (
              <React.Fragment key={g}>
                {group.map(([name, ToolIcon, menu]) => (
                  <React.Fragment key={name}>
                    <Tool aria-label={name}><ToolIcon /></Tool>
                    {menu && <Drop aria-label={`${name} menu`}><Chevron /></Drop>}
                  </React.Fragment>
                ))}
                <Divider />
              </React.Fragment>
            ))}
            <Tool aria-label="Add custom feature"><AddToolIcon /></Tool>
            <SearchTools>Se</SearchTools>
          </Toolbar>
          <Studio>
            <Side>
              <FilterRow>
                <FunnelIcon />
                <FilterInput placeholder="Filter by name or type" aria-label="Filter by name or type" />
              </FilterRow>
              <FeaturesHead>
                <ErrorIcon />
                <FeaturesTitle>Features ...</FeaturesTitle>
                <HeadButton aria-label="Add folder"><FolderIcon /></HeadButton>
                <HeadButton aria-label="Pause"><PauseIcon /></HeadButton>
                <button aria-label="Regeneration times"><StopwatchIcon /></button>
              </FeaturesHead>
              <GroupRow>
                <Chevron w={24} color="#666" />
                Default geometry
              </GroupRow>
              <Children>
                {geometry.map((item) => <FeatureRow key={item.name} item={item} nested />)}
              </Children>
              <ul>
                {features.map((item) => <FeatureRow key={item.name} item={item} />)}
              </ul>
              <RollbackBar />
              <Parts>
                <GroupRow>
                  <Chevron w={24} color="#666" />
                  Parts (1)
                </GroupRow>
                <ul>
                  <FeatureRow item={{ name: 'Part 1', icon: PartIcon }} nested />
                </ul>
              </Parts>
            </Side>
            <Viewport>
              <HoseScene />
              <LoftDialog />
            </Viewport>
          </Studio>
        </Main>
      </Body>
    </Page>
  );
}
